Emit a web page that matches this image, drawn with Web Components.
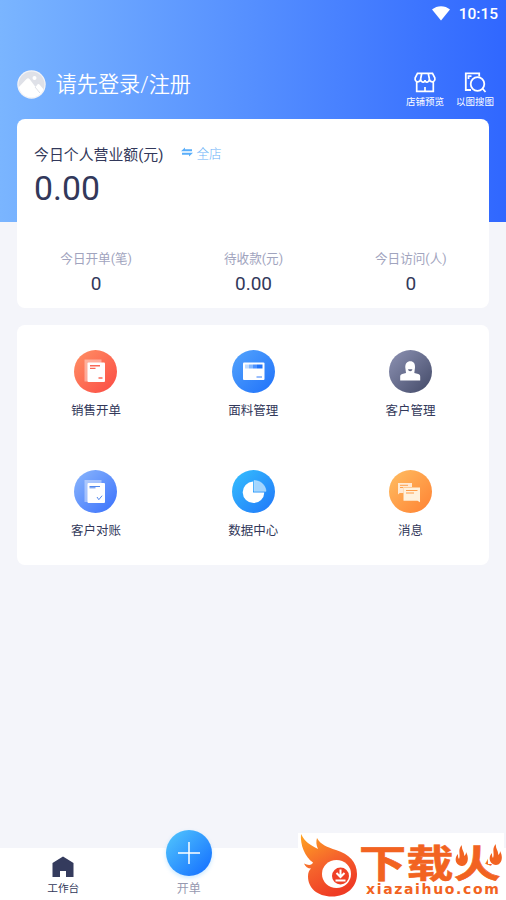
<!DOCTYPE html>
<html lang="zh-CN"><head><meta charset="utf-8"><title>工作台</title>
<style>
html,body{margin:0;height:100%;overflow:hidden}
body{font-family:Roboto,"Noto Sans CJK SC",sans-serif;background:#f4f5fa;color:#32385a}
</style></head><body>
<app-screen>
  <app-header slot="header"></app-header>
  <revenue-card></revenue-card>
  <menu-card>
    <menu-item label="销售开单"><svg viewBox="0 0 43 43"><defs><linearGradient id="a" x1="0" y1="0" x2="1" y2="1"><stop stop-color="#ff9165"/><stop offset="1" stop-color="#fb4a44"/></linearGradient></defs><circle cx="21.500" cy="21.500" r="21.500" fill="url(#a)"/><path d="M10.500 9.500h17v3.500H15v18.500h-4.500z" fill="#fff" opacity=".4"/><rect x="13.500" y="12.500" width="17.500" height="19.500" rx="1" fill="#fff"/><path d="M16 15.700h10M16 18.400h5.500M24.500 28h4" stroke="#fa6857" stroke-width="1.400"/></svg></menu-item>
    <menu-item label="面料管理"><svg viewBox="0 0 43 43"><defs><linearGradient id="b" x1="0" y1="0" x2="1" y2="1"><stop stop-color="#54a4fc"/><stop offset="1" stop-color="#1f71fa"/></linearGradient></defs><circle cx="21.500" cy="21.500" r="21.500" fill="url(#b)"/><rect x="11" y="12.500" width="21.500" height="17.500" rx="1" fill="#fff"/><path d="M13 14.500h4v4h-4z" fill="#c0dcff"/><path d="M17 14.500h4v4h-4z" fill="#83b7ff"/><path d="M21 14.500h4v4h-4z" fill="#4b91ff"/><path d="M25 14.500h5.500v4H25z" fill="#2374f7"/><path d="M24.500 27h5.500" stroke="#347efa"/></svg></menu-item>
    <menu-item label="客户管理"><svg viewBox="0 0 43 43"><defs><linearGradient id="c" x1="0" y1="0" x2="1" y2="1"><stop stop-color="#8e93b4"/><stop offset="1" stop-color="#424967"/></linearGradient></defs><circle cx="21.500" cy="21.500" r="21.500" fill="url(#c)"/><path d="M17 23l-.7-5.500c-.2-4 1.700-6.300 5-6.300s5 2.400 4.700 6.300l-.7 5.500 4 .9c1.500.4 1.900 1.400 1.900 2.600V30.500h-20V26.500c0-1.200.5-2.200 2-2.600z" fill="#fff"/><path d="M19 19.200h4.400c-.2 2.600-4.200 2.600-4.400 0z" fill="#626784"/></svg></menu-item>
    <menu-item label="客户对账"><svg viewBox="0 0 43 43"><defs><linearGradient id="d" x1="0" y1="0" x2="1" y2="1"><stop stop-color="#8cb7fc"/><stop offset="1" stop-color="#3970fc"/></linearGradient></defs><circle cx="21.500" cy="21.500" r="21.500" fill="url(#d)"/><path d="M10.500 10h17v3.500H15V32h-4.500z" fill="#fff" opacity=".4"/><rect x="13.500" y="13" width="17.500" height="20" rx="1" fill="#fff"/><path d="M15.500 16.500H26m-10.500 1.300h6M23 27l1.800 2.700 3.300-4" fill="none" stroke="#5388ec"/></svg></menu-item>
    <menu-item label="数据中心"><svg viewBox="0 0 43 43"><defs><linearGradient id="e" x1="0" y1="0" x2="1" y2="1"><stop stop-color="#35c0fe"/><stop offset="1" stop-color="#2076f9"/></linearGradient></defs><circle cx="21.500" cy="21.500" r="21.500" fill="url(#e)"/><path d="M21 11.500A10.800 10.800 0 1 0 32.300 22.500H21z" fill="#fff"/><path d="M22 10.500c6.500 0 11.600 4.600 12 10.800h-12z" fill="#b9e0ff" stroke="#def2ff" stroke-width=".5" opacity=".85"/></svg></menu-item>
    <menu-item label="消息"><svg viewBox="0 0 43 43"><defs><linearGradient id="f" x1="0" y1="0" x2="1" y2="1"><stop stop-color="#ffbe62"/><stop offset="1" stop-color="#ff8132"/></linearGradient></defs><circle cx="21.500" cy="21.500" r="21.500" fill="url(#f)"/><path d="M9 13h14v4h-8.500v6h-3.800L9 24.500z" fill="#fff" opacity=".75"/><path d="M11 15.300h8M11 17.500h3" stroke="#ffa04c"/><path d="M14.500 17.500H31v14.800l-2.500-1.500h-14z" fill="#fff1dc"/><path d="M17 20.500h11.500M17 23h8" stroke="#ff9d48"/></svg></menu-item>
  </menu-card>
  <tab-bar slot="tabs"></tab-bar>
</app-screen>
<site-mark></site-mark>
<script>
const define=(name,html)=>customElements.define(name,class extends HTMLElement{
  constructor(){super();const t=document.createElement('template');t.innerHTML=html;
    this.attachShadow({mode:'open'}).append(t.content.cloneNode(true));}
  connectedCallback(){for(const key of ['label','value']){const n=this.shadowRoot.querySelector('.'+key);if(n&&this.hasAttribute(key))n.textContent=this.getAttribute(key);}}
});
define('app-screen',`<style>
:host{display:flex;flex-direction:column;height:900px;width:506px;background:linear-gradient(90deg,#7ab5ff,#558fff 50%,#3067ff) 0 0/100% 222px no-repeat}
main{flex:1;display:flex;flex-direction:column;gap:17px;padding:0 17px}
</style><slot name="header"></slot><main><slot></slot></main><slot name="tabs"></slot>`);
define('header-action',`<style>:host{display:flex;flex-direction:column;align-items:center;width:38px;font-size:9.500px;line-height:14px;white-space:nowrap}::slotted(svg){width:24px;height:24px;display:block}.label{padding-top:1px}</style><slot></slot><span class="label"></span>`);
define('app-header',`<style>
:host{display:flex;flex-direction:column;height:119px;color:#fff}
.status{display:flex;justify-content:flex-end;align-items:center;gap:9px;height:27px;padding:0 8px 0 0;font-size:15.500px;font-weight:500}
.row{display:flex;align-items:flex-start;padding:43px 12px 0 17px}
.avatar{width:29px;height:29px}
.login{font-size:21.200px;line-height:28px;margin:1px 0 0 9.500px;flex:1;font-weight:350}
.actions{display:flex;gap:12px}
</style>
<div class="status"><svg width="18" height="15" viewBox="0 0 18 15"><path d="M0 3.500C5-1 13-1 18 3.500L9 14.500z" fill="#fff"/></svg><span>10:15</span></div>
<div class="row"><svg class="avatar" viewBox="0 0 29 29"><defs><clipPath id="k"><circle cx="14.500" cy="14.500" r="13"/></clipPath></defs><circle cx="14.500" cy="14.500" r="14.200" fill="#f4f4f7"/><g clip-path="url(#k)"><path d="M0 0h29v29H0z" fill="#dfe1e8"/><path d="M0 19l9.500-10c1-1 2-1 3 0l6 8 2-2.500c.6-.7 1.400-.6 2 0l5 6V29H0z" fill="#fff"/><circle cx="17.500" cy="8" r="2" fill="#fff"/><path d="M18 17l5 6" stroke="#dfe1e8"/></g></svg><span class="login">请先登录/注册</span>
<div class="actions"><header-action label="店铺预览"><svg viewBox="0 0 24 24" fill="none" stroke="#fff" stroke-width="1.700"><path d="M4.500 3.300h15l2.300 4.500c1 5-5 5.200-5.400 1.200-.5 4-4 4-4.400 1-.4 3-3.900 3-4.400-1C7.200 13 1.200 12.800 2.200 7.800zM8.800 3.300L7.600 9M15.200 3.300L16.400 9M3.700 12v9.300h16.600V12M12 17v4"/></svg></header-action>
<header-action label="以图搜图"><svg viewBox="0 0 24 24" fill="none" stroke="#fff" stroke-width="1.800"><path d="M8 20H2.800V3.300h13.400V6.500M5.500 9V6.200h3"/><circle cx="14.500" cy="14" r="6.800"/><path d="M19.500 18.500l3 3.500"/></svg></header-action></div></div>`);
define('stat-item',`<style>:host{display:flex;flex-direction:column;align-items:center;white-space:nowrap;padding-left:1px}.label{font-size:12.600px;line-height:18px;color:#a1a4be}.value{font-size:19px;line-height:24px;margin-top:4px}</style><span class="label"></span><span class="value"></span>`);
define('revenue-card',`<style>
:host{display:flex;flex-direction:column;box-sizing:border-box;height:189px;background:#fff;border-radius:8px;padding:23px 0 0}
.top{display:flex;align-items:center;height:22px;padding-left:17px;font-size:14.900px;white-space:nowrap}
.shop{display:flex;align-items:center;gap:3px;color:#69b2f8;font-size:12.600px;font-weight:300;margin:-2px 0 0 18px}
.total{font-size:33.800px;line-height:42px;padding:4px 0 0 17px}
.stats{display:grid;grid-template-columns:repeat(3,1fr);margin-top:40px}
</style><div class="top"><span>今日个人营业额(元)</span><span class="shop"><svg width="12" height="10" viewBox="0 0 12 10"><path d="M0 4.300L4 .5v1.800h7v2zM12 5.700L8 9.500V7.700H1v-2z" fill="#5aaefa"/></svg>全店</span></div><div class="total">0.00</div>
<div class="stats"><stat-item label="今日开单(笔)" value="0"></stat-item><stat-item label="待收款(元)" value="0.00"></stat-item><stat-item label="今日访问(人)" value="0"></stat-item></div>`);
define('menu-card',`<style>:host{display:grid;grid-template-columns:repeat(3,1fr);grid-template-rows:120px 120px;background:#fff;border-radius:8px}</style><slot></slot>`);
define('menu-item',`<style>:host{display:flex;flex-direction:column;align-items:center;padding:25px 0 0 .6px;box-sizing:border-box;font-size:12.500px;line-height:18px;gap:9px}::slotted(svg){width:43px;height:43px}</style><slot></slot><span class="label"></span>`);
define('tab-bar',`<style>
:host{display:grid;grid-template-columns:repeat(4,126.500px);height:52px;background:#fff}
.tab{display:flex;flex-direction:column;align-items:center;font-size:10.700px;line-height:14px;position:relative}
.tab svg{width:22px;height:22px;margin-top:8px}
.tab span{margin-top:4px}
.add{font-size:12px;color:#9699b0;line-height:16px;margin-left:-1px;margin-right:1px}
.plus{width:46px;height:46px;border-radius:50%;margin-top:-18px;flex:none;background:linear-gradient(135deg,#4bbdfd 12%,#1976ff 88%);box-shadow:0 2px 4px #3aa8ff44;display:grid;place-items:center}
.plus svg{margin:0}
.add span{margin-top:5px}
</style><div class="tab"><svg viewBox="0 0 22 22"><path d="M11 .5L21.500 7v14H14v-6H8v6H.5V7z" fill="#343b5d"/></svg><span>工作台</span></div>
<div class="tab add"><div class="plus"><svg viewBox="0 0 22 22"><path d="M11 0v22M0 11h22" stroke="#fff" stroke-width="1.500"/></svg></div><span>开单</span></div>`);
define('site-mark',`<style>
:host{position:absolute;left:298px;top:833px;width:206px;height:64px;background:#fff;display:flex;color:#f26321}
.flame{width:61px;height:64px;flex:none}
.words{display:flex;flex-direction:column}
.name{position:relative;width:145px;height:50px;padding-top:8px;box-sizing:border-box}
.name b{display:block;font:700 40px/40px "Noto Sans CJK SC",sans-serif;-webkit-text-stroke:.6px #f26321;white-space:nowrap;transform:scale(1.18,.95);transform-origin:0 50%}
.name svg{position:absolute;left:96px;top:9px;width:48px;height:26px}
.url{font:bold 14px/13px "DejaVu Sans",sans-serif;letter-spacing:1.650px;margin:0 0 0 7px;white-space:nowrap}
</style><svg class="flame" viewBox="0 0 61 64"><defs><linearGradient id="g" x1="0" y1="0" x2=".5" y2="1"><stop stop-color="#ffa522"/><stop offset=".55" stop-color="#f5632c"/><stop offset="1" stop-color="#ef3c24"/></linearGradient></defs><path fill="url(#g)" d="M3 1c4 8 9 11 17 15-2-4-2-8-1-11 4 7 10 9 19 12 13 4 21 12 21 24 0 13-10 22.500-25 22.500-15 0-24-9-24-20 0-4 1-6 3-8-3 0-6-2-7-5 4 2 8 2 9-1C7 24 2 12 3 1z"/><ellipse cx="38.500" cy="41" rx="14.500" ry="14" fill="#fff"/><circle cx="42.500" cy="43" r="8.500" fill="#ef4026"/><path d="M42.500 36.500v7m-4-3.500l4 4 4-4M37.500 47.500h10" fill="none" stroke="#fff" stroke-width="2"/></svg>
<div class="words"><div class="name"><b>下载火</b><svg viewBox="0 0 48 26"><path d="M0 0h14v23H0zM32 0h16v22H33z" fill="#fff"/><path d="M7 3c-1 5 3 7 2 11 2-1 2-3 2-4 4 7 1 14-4 14-7-1-8-8-4-12 0 2 0 4 1 5 2-5-2-9 3-14z" fill="#f26321"/><path d="M41 2c-1 5 3 7 2 11 2-1 2-3 2-4 4 7 1 14-4 14-7-1-8-8-4-12 0 2 0 4 1 5 2-5-2-9 3-14z" fill="#f26321"/></svg></div><span class="url">xiazaihuo.com</span></div>`);
</script></body></html>
